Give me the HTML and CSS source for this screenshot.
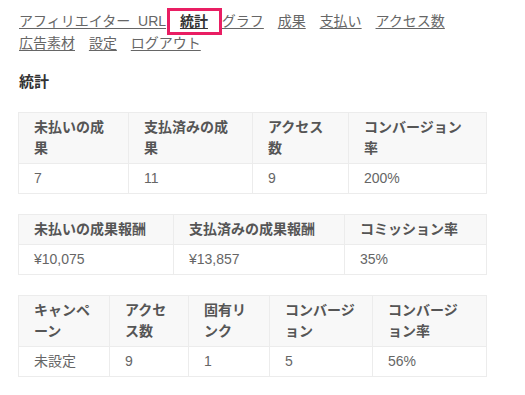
FILE: index.html
```html
<!DOCTYPE html>
<html lang="ja">
<head>
  <meta charset="UTF-8">
  <title>統計</title>
  <link rel="stylesheet" href="styles.css">
</head>
<body>

  <div class="page">
    <nav class="menu">
      <a href="#">アフィリエイター URL</a>
      <a href="#" class="current">統計</a>
      <a href="#">グラフ</a>
      <a href="#">成果</a>
      <a href="#">支払い</a>
      <a href="#">アクセス数</a>
      <a href="#">広告素材</a>
      <a href="#">設定</a>
      <a href="#">ログアウト</a>
    </nav>

    <h2>統計</h2>

    <table class="stats">
      <colgroup>
        <col style="width:110px"><col style="width:124px"><col style="width:96px"><col>
      </colgroup>
      <thead>
        <tr><th>未払いの成果</th><th>支払済みの成果</th><th>アクセス数</th><th>コンバージョン率</th></tr>
      </thead>
      <tbody>
        <tr><td>7</td><td>11</td><td>9</td><td>200%</td></tr>
      </tbody>
    </table>

    <table class="stats">
      <colgroup>
        <col style="width:155px"><col style="width:171px"><col>
      </colgroup>
      <thead>
        <tr><th>未払いの成果報酬</th><th>支払済みの成果報酬</th><th>コミッション率</th></tr>
      </thead>
      <tbody>
        <tr><td>¥10,075</td><td>¥13,857</td><td>35%</td></tr>
      </tbody>
    </table>

    <table class="stats">
      <colgroup>
        <col style="width:91px"><col style="width:79px"><col style="width:81px"><col style="width:103px"><col>
      </colgroup>
      <thead>
        <tr><th>キャンペーン</th><th>アクセス数</th><th>固有リンク</th><th>コンバージョン</th><th>コンバージョン率</th></tr>
      </thead>
      <tbody>
        <tr><td>未設定</td><td>9</td><td>1</td><td>5</td><td>56%</td></tr>
      </tbody>
    </table>
  </div>

</body>
</html>
```

FILE: styles.css
```css
body {
  margin: 0;
  font-family: "Liberation Sans", "Noto Sans CJK JP", sans-serif;
  font-size: 14px;
  line-height: 21px;
  color: #555;
  background: #fff;
}

.page {
  width: 469px;
  padding: 10px 18px;
}

.menu {
  padding-left: 1px;
  line-height: 22px;
}

.menu a {
  color: #666;
  text-decoration: underline;
  text-underline-offset: 2px;
  margin-right: 10px;
  white-space: nowrap;
}

.menu a:first-child {
  word-spacing: 4px;
}

.menu a.current {
  position: relative;
  color: #333;
  font-weight: 700;
}

/* highlight frame drawn over the active item */
.menu a.current::after {
  content: "";
  position: absolute;
  left: -13px;
  right: -14px;
  top: -5px;
  bottom: -6px;
  border: 3px solid #e91e63;
}

h2 {
  font-size: 15px;
  font-weight: 700;
  color: #333;
  margin: 17px 0 20px 1px;
  line-height: 21px;
}

.stats {
  width: 469px;
  border-collapse: collapse;
  table-layout: fixed;
  margin-bottom: 20px;
}

.stats th,
.stats td {
  border: 1px solid #ececec;
  padding: 4px 15px;
  text-align: left;
  vertical-align: top;
}

.stats th {
  background: #f8f8f8;
  font-weight: 700;
  color: #555;
}

.stats td {
  color: #666;
}
```
